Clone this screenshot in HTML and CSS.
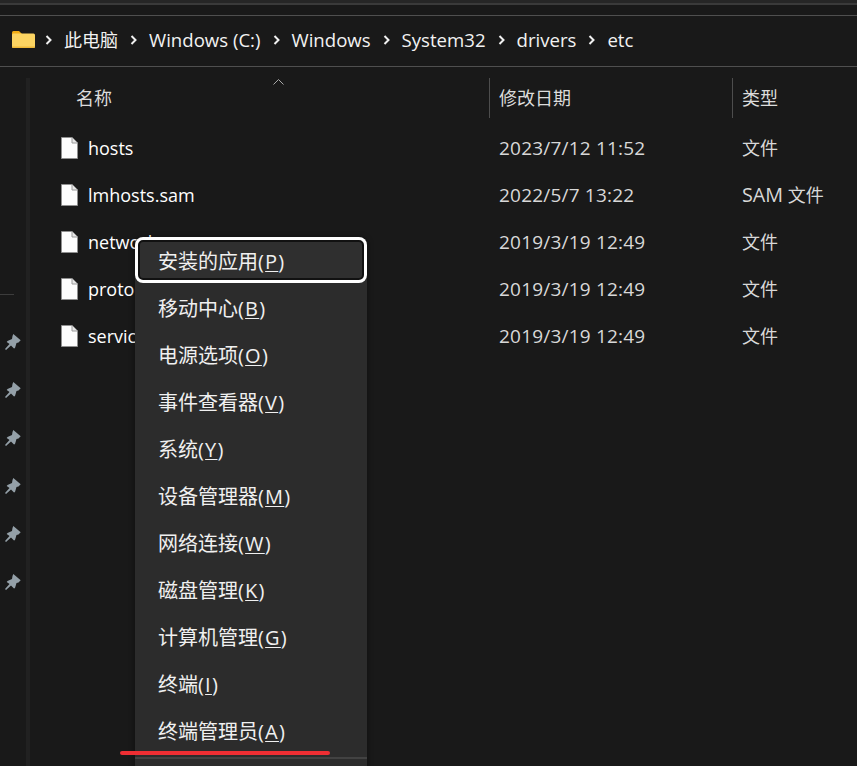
FILE: index.html
```html
<!DOCTYPE html>
<html lang="zh-CN">
<head>
<meta charset="utf-8">
<title>etc</title>
<link rel="stylesheet" href="styles.css">
</head>
<body>
<svg class="defs" width="0" height="0" aria-hidden="true">
  <defs>
    <symbol id="file" viewBox="0 0 17 22">
      <path d="M.5.5H11L16.5 6V21.500H.5Z" fill="#fdfdfd" stroke="#8f8f8f"/>
      <path d="M11 .5V6H16.500" fill="#e8e8e8" stroke="#9a9a9a"/>
    </symbol>
    <symbol id="pin" viewBox="0 0 16 16">
      <path d="M8.300 0 15.700 6.300 13.500 8.500 11.500 9 10 14 9 14.500 6 11.500 1 16 0 15 4.500 10 1.700 8 2.500 7 7 5 7.500 2Z" fill="#94a0a8"/>
    </symbol>
    <symbol id="chev" viewBox="0 0 8 12">
      <path d="M1.500 2 5.500 6 1.500 10" fill="none" stroke="#f0f0f0" stroke-width="2"/>
    </symbol>
  </defs>
</svg>
<div class="top-strip"></div>
<nav class="crumbs">
  <svg class="folder" viewBox="0 0 23 17" width="23" height="17">
    <path d="M0 1.500Q0 0 1.500 0H7L9.500 2.500V5H0Z" fill="#f2ac14"/>
    <path d="M0 4Q0 2.500 1.500 2.500H21.500Q23 2.500 23 4V15.500Q23 17 21.500 17H1.500Q0 17 0 15.500Z" fill="#fcd462"/>
    <path d="M0 15.500H23Q23 17 21.500 17H1.500Q0 17 0 15.500Z" fill="#eeb838"/>
  </svg>
  <svg class="chev first"><use href="#chev"/></svg>
  <span class="crumb cjk">此电脑</span>
  <svg class="chev"><use href="#chev"/></svg>
  <span class="crumb">Windows (C:)</span>
  <svg class="chev"><use href="#chev"/></svg>
  <span class="crumb">Windows</span>
  <svg class="chev"><use href="#chev"/></svg>
  <span class="crumb">System32</span>
  <svg class="chev"><use href="#chev"/></svg>
  <span class="crumb">drivers</span>
  <svg class="chev"><use href="#chev"/></svg>
  <span class="crumb">etc</span>
</nav>
<div class="main">
  <aside class="side">
    <div class="side-rule"></div>
    <div class="pins">
      <svg class="pin"><use href="#pin"/></svg>
      <svg class="pin"><use href="#pin"/></svg>
      <svg class="pin"><use href="#pin"/></svg>
      <svg class="pin"><use href="#pin"/></svg>
      <svg class="pin"><use href="#pin"/></svg>
      <svg class="pin"><use href="#pin"/></svg>
    </div>
  </aside>
  <section class="list">
    <div class="head">
      <div class="cell c-name">名称<svg class="sort" viewBox="0 0 11 6" width="11" height="6"><path d="M.5 5.500 5.500 .5 10.500 5.500" fill="none" stroke="#a8a8a8"/></svg></div>
      <div class="cell c-date">修改日期</div>
      <div class="cell c-type">类型</div>
    </div>
    <div class="row"><div class="c-name"><svg class="file"><use href="#file"/></svg><span>hosts</span></div><div class="c-date stamp">2023/7/12 11:52</div><div class="c-type plain">文件</div></div>
    <div class="row"><div class="c-name"><svg class="file"><use href="#file"/></svg><span>lmhosts.sam</span></div><div class="c-date stamp">2022/5/7 13:22</div><div class="c-type"><span class="ext">SAM</span> 文件</div></div>
    <div class="row"><div class="c-name"><svg class="file"><use href="#file"/></svg><span>networks</span></div><div class="c-date stamp">2019/3/19 12:49</div><div class="c-type plain">文件</div></div>
    <div class="row"><div class="c-name"><svg class="file"><use href="#file"/></svg><span>protocol</span></div><div class="c-date stamp">2019/3/19 12:49</div><div class="c-type plain">文件</div></div>
    <div class="row"><div class="c-name"><svg class="file"><use href="#file"/></svg><span>services</span></div><div class="c-date stamp">2019/3/19 12:49</div><div class="c-type plain">文件</div></div>
  </section>
</div>
<div class="menu">
  <div class="item focused">安装的应用<span class="key">(<u>P</u>)</span></div>
  <div class="item">移动中心<span class="key">(<u>B</u>)</span></div>
  <div class="item">电源选项<span class="key">(<u>O</u>)</span></div>
  <div class="item">事件查看器<span class="key">(<u>V</u>)</span></div>
  <div class="item">系统<span class="key">(<u>Y</u>)</span></div>
  <div class="item">设备管理器<span class="key">(<u>M</u>)</span></div>
  <div class="item">网络连接<span class="key">(<u>W</u>)</span></div>
  <div class="item">磁盘管理<span class="key">(<u>K</u>)</span></div>
  <div class="item">计算机管理<span class="key">(<u>G</u>)</span></div>
  <div class="item">终端<span class="key">(<u>I</u>)</span></div>
  <div class="item">终端管理员<span class="key">(<u>A</u>)</span></div>
  <div class="menu-sep"></div>
</div>
<div class="red-mark"></div>
</body>
</html>
```
FILE: styles.css
```css
* { box-sizing: border-box; }
html, body { height: 100%; }
body {
  margin: 0;
  background: #191919;
  color: #f2f2f2;
  font-family: "Open Sans", "Noto Sans CJK SC", sans-serif;
  font-size: 18px;
  overflow: hidden;
  position: relative;
}
.defs { position: absolute; }
.top-strip {
  height: 16px;
  border-bottom: 1px solid #4f4f4f;
  background: linear-gradient(#262626 0 3px, #3a3a3a 3px 5px, #191919 5px);
}
.crumbs {
  height: 51px;
  border-bottom: 1px solid #4f4f4f;
  display: flex;
  align-items: center;
  padding: 0 0 2px 12px;
}
.folder { margin-bottom: 1px; }
.chev { width: 8px; height: 12px; margin: 0 11px 0 12px; flex: none; }
.chev.first { margin-left: 10px; }
.crumb { line-height: 24px; font-size: 18.6px; }
.crumb.cjk { font-size: 18px; }
.main { display: flex; }
.side {
  width: 30px;
  height: 700px;
  border-right: 4px solid #212121;
  margin-top: 11px;
  position: relative;
}
.side-rule {
  height: 1px;
  width: 14px;
  background: #3c3c3c;
  margin-top: 216px;
}
.pins {
  display: flex;
  flex-direction: column;
  gap: 32px;
  margin-top: 39px;
  padding-left: 5px;
}
.pin { width: 16px; height: 16px; display: block; }
.list { flex: 1; padding-top: 11px; }
.head, .row { display: flex; align-items: center; }
.head { height: 40px; margin-bottom: 6px; }
.row { height: 47px; }
.c-name {
  width: 459px;
  flex: none;
  display: flex;
  align-items: center;
  padding-left: 31px;
  position: relative;
}
.c-date { width: 243px; flex: none; padding-left: 10px; }
.c-type { flex: 1; padding-left: 10px; }
.c-type.plain { padding-bottom: 2px; }
.stamp { font-size: 19px; letter-spacing: .2px; }
.ext { font-size: 19.8px; }
.cell { height: 40px; line-height: 40px; color: #dcdcdc; }
.head .c-name { padding-left: 46px; }
.head .c-date { border-left: 1px solid #4d4d4d; padding-left: 9px; }
.head .c-type { border-left: 1px solid #4d4d4d; padding-left: 9px; }
.sort { position: absolute; left: 243px; top: 1px; }
.file { width: 17px; height: 22px; flex: none; margin: 1px 10px 0 0; }
.row .c-name { color: #fff; }
.row .c-date, .row .c-type { color: #d8d8d8; }
.menu {
  position: absolute;
  left: 135px;
  top: 238px;
  width: 232px;
  height: 540px;
  background: #2c2c2c;
  box-shadow: 0 0 6px rgba(0,0,0,.45);
  border-radius: 6px 6px 0 0;
  font-size: 20px;
}
.item {
  height: 47px;
  line-height: 47px;
  padding-left: 23px;
  color: #f0f0f0;
  white-space: nowrap;
}
.key { letter-spacing: 1.2px; }
.item u { text-underline-offset: 2px; text-decoration-thickness: 1px; }
.item.focused {
  height: 46px;
  line-height: 50px;
  margin: -1px 0 2px;
  border-radius: 8px;
  background: #2f2f2f;
  box-shadow: inset 0 0 0 3px #fff, inset 0 0 0 5px #111;
}
.menu-sep { height: 2px; background: #424242; margin-top: 2px; }
.red-mark {
  position: absolute;
  left: 120px;
  top: 751px;
  width: 210px;
  height: 4px;
  border-radius: 2px;
  background: #ee2e33;
}
```
